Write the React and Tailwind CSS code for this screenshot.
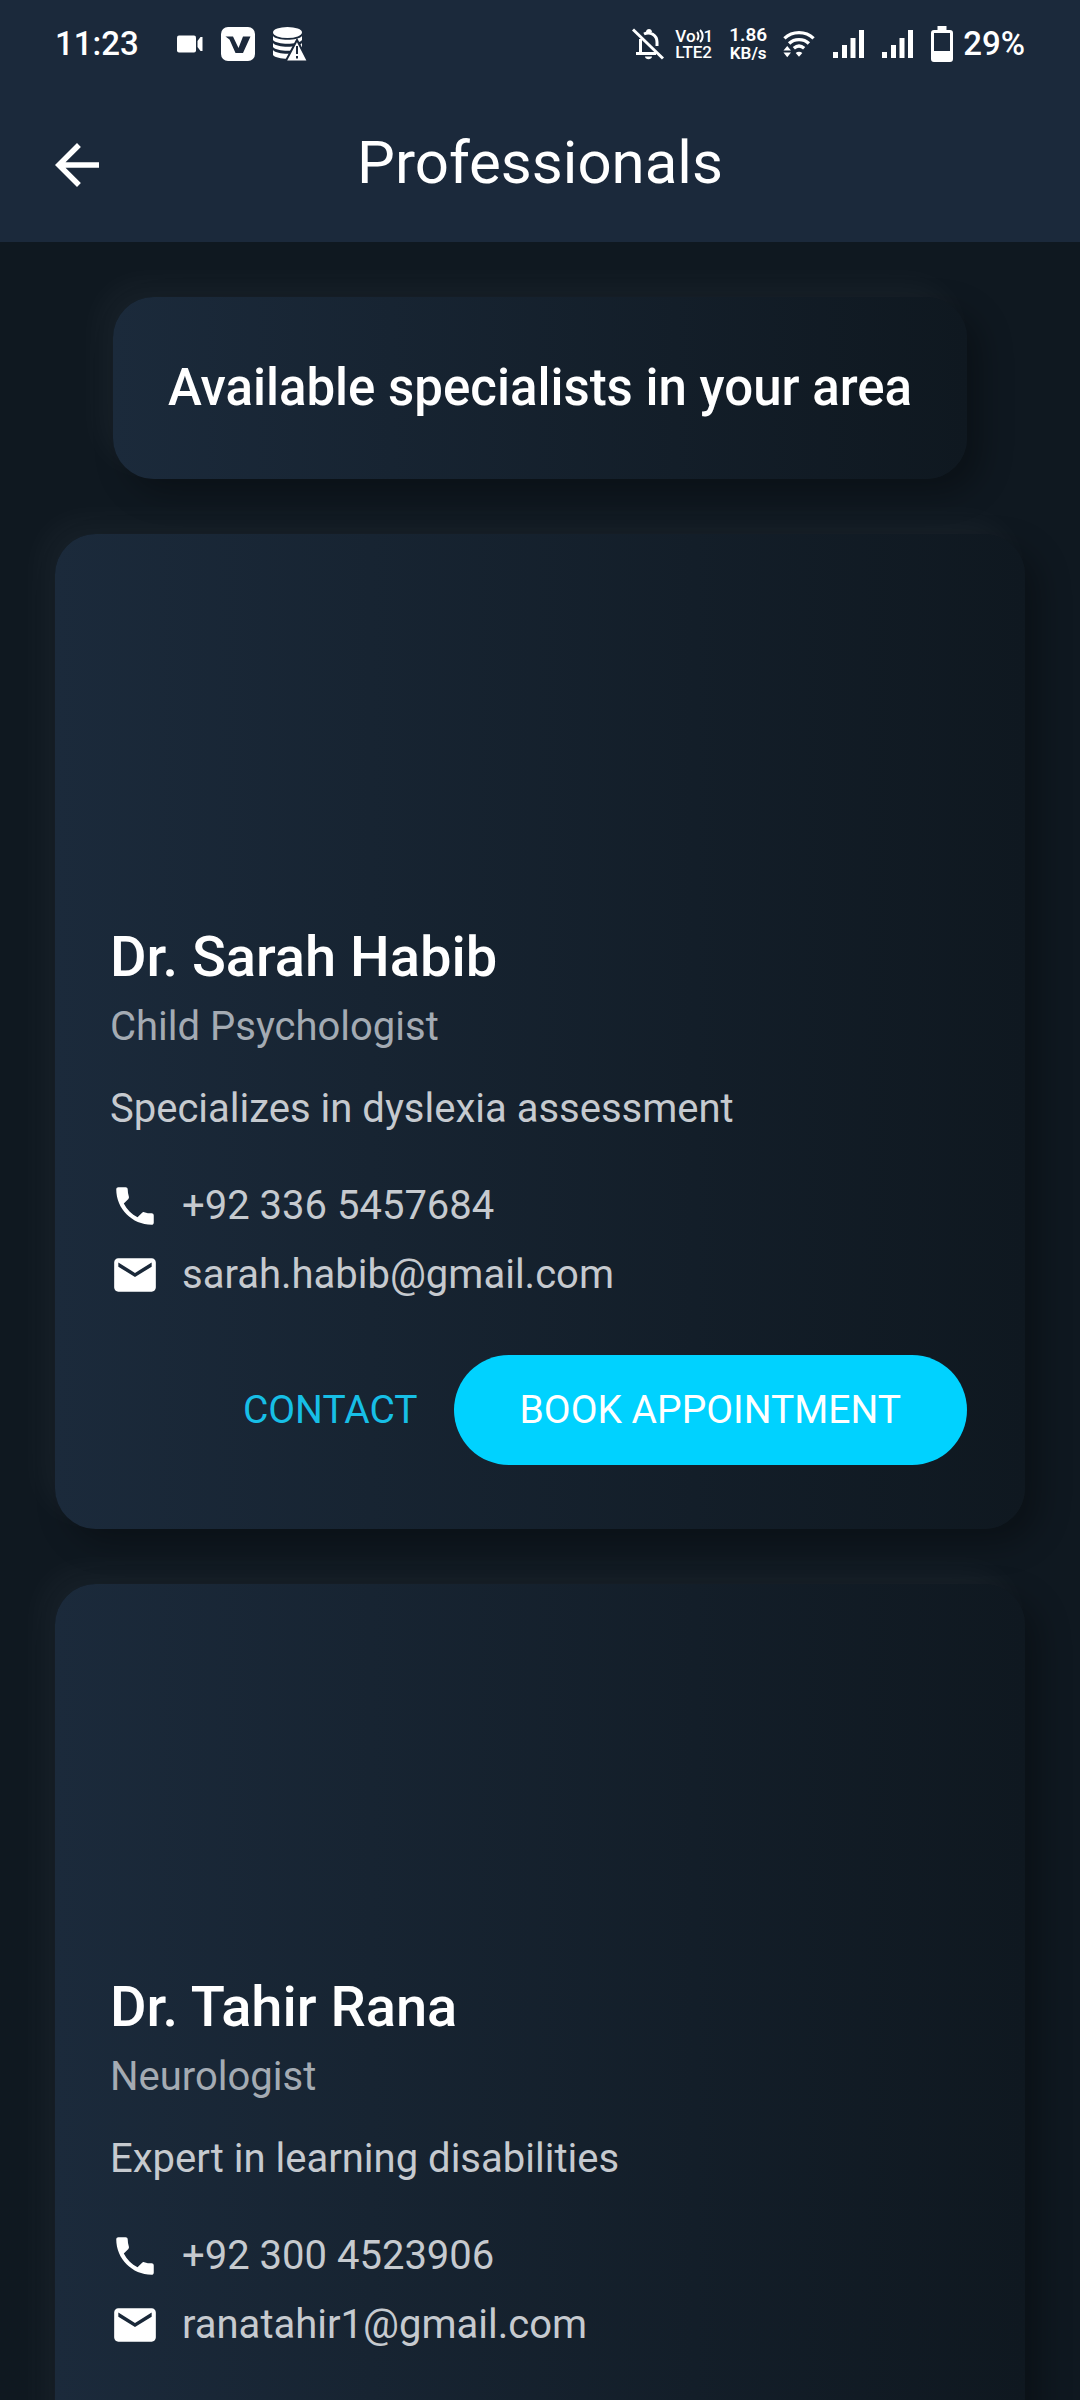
const professionals = [
  {
    name: "Dr. Sarah Habib",
    role: "Child Psychologist",
    about: "Specializes in dyslexia assessment",
    phone: "+92 336 5457684",
    email: "sarah.habib@gmail.com",
  },
  {
    name: "Dr. Tahir Rana",
    role: "Neurologist",
    about: "Expert in learning disabilities",
    phone: "+92 300 4523906",
    email: "ranatahir1@gmail.com",
  },
];

function VideoIcon() {
  return (
    <svg viewBox="0 0 26 18" className="h-[18px] w-[26px]" fill="currentColor" aria-hidden="true">
      <rect x="0" y="0.5" width="19" height="17" rx="2" />
      <path d="M20.5 6 L23.5 2 H25.5 V16 H23.5 L20.5 12 Z" />
    </svg>
  );
}

function VAppIcon() {
  return (
    <svg viewBox="0 0 34 34" className="size-[34px]" aria-hidden="true">
      <rect width="34" height="34" rx="7" fill="currentColor" />
      <path d="M4.5 9.5 H12 L17.5 21 L22 9.5 H29.5 L22 26 H14.5 L8.5 12.5 Z" fill="#1c293b" />
    </svg>
  );
}

function StorageWarningIcon() {
  return (
    <svg viewBox="0 0 34 34" className="size-[34px]" aria-hidden="true">
      <g fill="currentColor">
        <ellipse cx="14.5" cy="5.5" rx="14.5" ry="5.5" />
        <path d="M0 9 C4 14 25 14 29 9 V13 C25 18 4 18 0 13 Z" />
        <path d="M0 16 C4 21 25 21 29 16 V20 C25 25 4 25 0 20 Z" />
        <path d="M0 23 C4 28 25 28 29 23 V28 C25 33 4 33 0 28 Z" />
      </g>
      <path d="M24 13 L35 34.5 H12.5 Z" fill="currentColor" stroke="#1c293b" strokeWidth="2" />
      <path d="M24 19 V27 M24 29 V31.5" stroke="#1c293b" strokeWidth="2" />
    </svg>
  );
}

function BellOffIcon() {
  return (
    <svg viewBox="0 0 32 32" className="size-8" fill="none" stroke="currentColor" strokeWidth="3" aria-hidden="true">
      <path d="M8.5 11 V25 M4 25.5 H24" />
      <path d="M12 6 C18 3 25 7 25 14 V18" />
      <path d="M14 4 C14 0 20 0 20 4 Z M13 28.500 H20 C20 32 13 32 13 28.500 Z" fill="currentColor" stroke="none" />
      <path d="M1 1.500 L31 30.500" />
    </svg>
  );
}

function VoiceWaves() {
  return (
    <svg viewBox="0 0 8 14" className="h-3.5 w-2" fill="none" stroke="currentColor" strokeWidth="2" aria-hidden="true">
      <path d="M1 3 C3 5 3 9 1 11 M4 1 C7.500 4 7.500 10 4 13" />
    </svg>
  );
}

function WifiIcon() {
  return (
    <svg viewBox="0 0 34 28" className="h-7 w-8" fill="none" stroke="currentColor" strokeWidth="3.500" aria-hidden="true">
      <path d="M1.500 8 C10 0 24 0 32.500 8" />
      <path d="M6.500 13.500 C12 8 22 8 27.500 13.500" />
      <path d="M11.500 18.500 C15 15.500 19 15.500 22.500 18.500" />
      <path d="M13.500 23.500 C15.500 21.800 18.500 21.800 20.500 23.500 L17 27.500 Z" fill="currentColor" stroke="none" />
      <path d="M0.500 21 L4.500 16 L8.500 21 Z M0.500 23 L4.500 28 L8.500 23 Z" fill="currentColor" stroke="none" />
    </svg>
  );
}

function SignalIcon() {
  return (
    <svg viewBox="0 0 31 28" className="h-7 w-[31px]" fill="currentColor" aria-hidden="true">
      <rect x="0" y="22" width="5" height="6" />
      <rect x="9" y="15" width="5" height="13" />
      <rect x="17.500" y="8" width="5" height="20" />
      <rect x="26" y="0" width="5" height="28" />
    </svg>
  );
}

function BatteryIcon() {
  return (
    <svg viewBox="0 0 22 36" className="h-9 w-[22px]" aria-hidden="true">
      <rect x="6.500" y="0" width="9" height="5" fill="currentColor" />
      <rect x="1.500" y="5.500" width="19" height="29" rx="1.500" fill="none" stroke="currentColor" strokeWidth="3" />
      <rect x="2" y="25" width="18" height="9" fill="currentColor" />
    </svg>
  );
}

function ArrowBackIcon() {
  return (
    <svg viewBox="0 0 24 24" className="size-[66px]" fill="currentColor" aria-hidden="true">
      <path d="M20 11H7.830l5.590-5.590L12 4l-8 8 8 8 1.410-1.410L7.830 13H20v-2z" />
    </svg>
  );
}

function PhoneIcon() {
  return (
    <svg viewBox="0 0 24 24" className="size-[50px] shrink-0 text-white" fill="currentColor" aria-hidden="true">
      <path d="M6.620 10.790c1.440 2.830 3.760 5.140 6.590 6.590l2.200-2.200c.27-.27.67-.36 1.020-.24 1.120.37 2.330.57 3.570.57.550 0 1 .45 1 1V20c0 .55-.45 1-1 1-9.390 0-17-7.610-17-17 0-.55.45-1 1-1h3.500c.55 0 1 .45 1 1 0 1.250.2 2.450.57 3.570.11.350.03.740-.25 1.020l-2.200 2.200z" />
    </svg>
  );
}

function MailIcon() {
  return (
    <svg viewBox="0 0 24 24" className="size-[50px] shrink-0 text-white" fill="currentColor" aria-hidden="true">
      <path d="M20 4H4c-1.100 0-1.990.9-1.990 2L2 18c0 1.100.9 2 2 2h16c1.100 0 2-.9 2-2V6c0-1.100-.9-2-2-2zm0 4l-8 5-8-5V6l8 5 8-5v2z" />
    </svg>
  );
}

function StatusBar() {
  return (
    <div className="flex h-[88px] items-center justify-between px-[55px] font-medium text-white">
      <div className="flex items-center">
        <span className="mr-[38px] text-[33px] leading-10">11:23</span>
        <div className="flex items-center gap-[18px]">
          <VideoIcon />
          <VAppIcon />
          <StorageWarningIcon />
        </div>
      </div>
      <div className="flex items-center">
        <BellOffIcon />
        <span className="ml-[11px] flex flex-col text-[17px] leading-4">
          <span className="flex items-center justify-between">
            <span>Vo</span>
            <VoiceWaves />
            <span>1</span>
          </span>
          <span>LTE2</span>
        </span>
        <span className="ml-4 flex flex-col items-center text-[19px] leading-[18px] font-semibold">
          <span>1.86</span>
          <span className="text-[17px]">KB/s</span>
        </span>
        <div className="ml-4 flex items-center gap-[18px]">
          <WifiIcon />
          <SignalIcon />
          <SignalIcon />
          <BatteryIcon />
        </div>
        <span className="ml-2.5 text-[33px] leading-10">29%</span>
      </div>
    </div>
  );
}

function ProfessionalCard({ person }) {
  return (
    <article className="flex flex-col rounded-[41px] bg-linear-to-r from-[#1b2a3b] to-[#0f1820] px-[55px] pt-[390px] pb-16 shadow-[-14px_-14px_32px_rgba(255,255,255,0.04),14px_14px_32px_rgba(0,0,0,0.3)]">
      <h2 className="text-[56px] leading-[66px] font-medium text-white">{person.name}</h2>
      <p className="mt-3.5 text-[40px] leading-[46px] text-[#a4abb3]">{person.role}</p>
      <p className="mt-9 text-[40px] leading-[46px] text-[#c6cacf]">{person.about}</p>
      <div className="mt-[49px] flex flex-col gap-[19px] text-[40px] leading-[50px] text-[#c6cacf]">
        <div className="flex items-center gap-[22px]">
          <PhoneIcon />
          <span>{person.phone}</span>
        </div>
        <div className="flex items-center gap-[22px]">
          <MailIcon />
          <span>{person.email}</span>
        </div>
      </div>
      <div className="mt-[55px] flex items-center justify-end gap-9 pr-[3px] text-[39px] leading-[46px]">
        <button type="button" className="text-[#17bfe6]">CONTACT</button>
        <button type="button" className="h-[110px] rounded-full bg-[#00d2ff] px-[66px] text-white">
          BOOK APPOINTMENT
        </button>
      </div>
    </article>
  );
}

export default function App() {
  return (
    <div className="h-screen overflow-hidden bg-[#0f1820] font-['Roboto',sans-serif]">
      <header className="bg-[#1b293b]">
        <StatusBar />
        <div className="grid h-[154px] grid-cols-[66px_1fr_66px] items-center px-11 text-white">
          <button type="button" aria-label="Back">
            <ArrowBackIcon />
          </button>
          <h1 className="pb-1 text-center text-[60px] leading-[72px]">Professionals</h1>
        </div>
      </header>
      <main className="flex flex-col gap-[55px] px-[55px] pt-[55px]">
        <p className="self-center rounded-[41px] bg-linear-to-r from-[#1b2a3b] to-[#0f1820] p-[55px] text-[51px] leading-[72px] font-medium text-white shadow-[-14px_-14px_32px_rgba(255,255,255,0.04),14px_14px_32px_rgba(0,0,0,0.3)]">
          Available specialists in your area
        </p>
        {professionals.map((person) => (
          <ProfessionalCard key={person.name} person={person} />
        ))}
      </main>
    </div>
  );
}
